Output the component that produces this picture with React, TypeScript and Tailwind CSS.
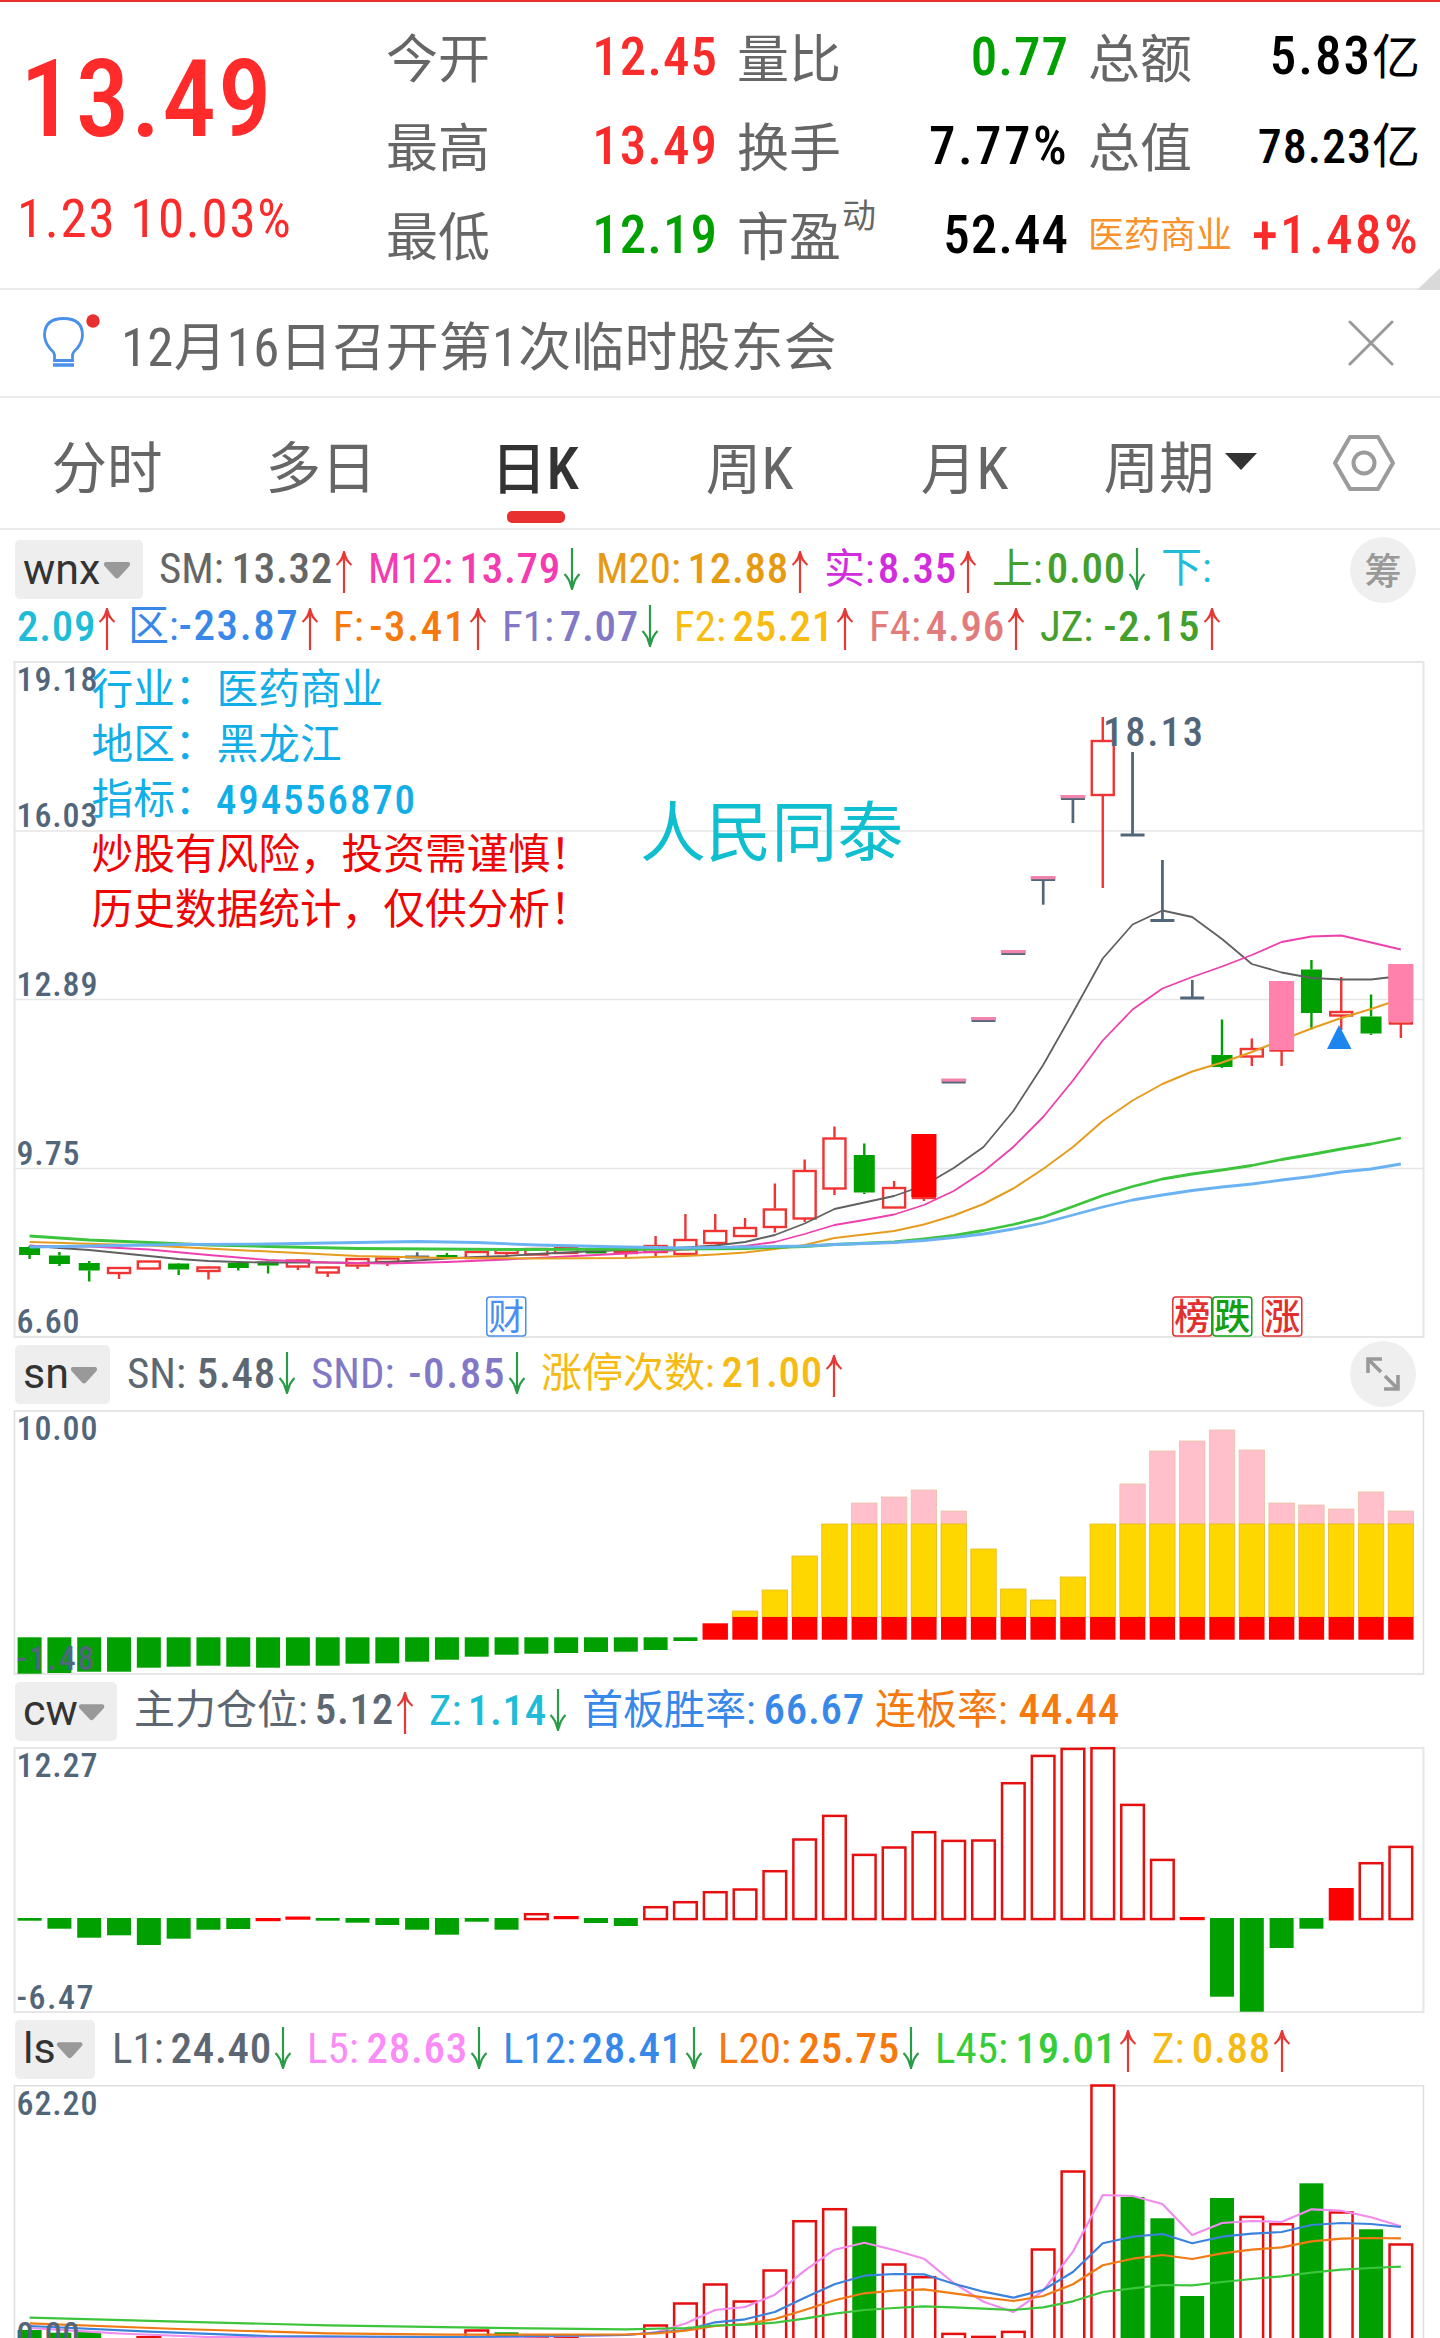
import clsx from "clsx";

const RED = "#e60f0f";
const GREEN = "#00a000";
const SLATE = "#52667a";
const FONT = "'Roboto Condensed', 'Noto Sans CJK SC', sans-serif";

// 47 trading days on screen
const STEP = 29.81;
const cx = (i: number) => 29.6 + i * STEP;

type Quote = { label: string; sup?: string; value: string; unit?: string; color: string; labelClass?: string; valueClass?: string };

const quotes: Quote[][] = [
  [
    { label: "今开", value: "12.45", color: "text-[#fa2b2b]" },
    { label: "最高", value: "13.49", color: "text-[#fa2b2b]" },
    { label: "最低", value: "12.19", color: "text-[#00a000]" },
  ],
  [
    { label: "量比", value: "0.77", color: "text-[#00a000]" },
    { label: "换手", value: "7.77%", color: "text-black", valueClass: "text-[53px] tracking-[2.4px]" },
    { label: "市盈", sup: "动", value: "52.44", color: "text-black" },
  ],
  [
    { label: "总额", value: "5.83", unit: "亿", color: "text-black", valueClass: "text-[53px] tracking-[2px]" },
    { label: "总值", value: "78.23", unit: "亿", color: "text-black", valueClass: "text-[48px] tracking-[1px] pt-[3px]" },
    { label: "医药商业", value: "+1.48%", color: "text-[#fa2b2b]", labelClass: "text-[36px] pt-[2px] text-[#f7922d]", valueClass: "text-[53px] tracking-[2.4px]" },
  ],
];

type Item = { name: string; value: string; color: string; w: string; dir?: "up" | "down" };

const wnxRow1: Item[] = [
  { name: "SM:", value: "13.32", color: "text-[#666666]", w: "w-[209px]", dir: "up" },
  { name: "M12:", value: "13.79", color: "text-[#f53bb0]", w: "w-[228px]", dir: "down" },
  { name: "M20:", value: "12.88", color: "text-[#e69a12]", w: "w-[228px]", dir: "up" },
  { name: "实:", value: "8.35", color: "text-[#d22ddc]", w: "w-[168px]", dir: "up" },
  { name: "上:", value: "0.00", color: "text-[#43a02c]", w: "w-[169px]", dir: "down" },
  { name: "下:", value: "", color: "text-[#1fbcd8]", w: "w-[60px]" },
];

const wnxRow2: Item[] = [
  { name: "", value: "2.09", color: "text-[#1fbcd8]", w: "w-[111px]", dir: "up" },
  { name: "区:", value: "-23.87", color: "text-[#3888ea]", w: "w-[205px]", dir: "up" },
  { name: "F:", value: "-3.41", color: "text-[#f5790e]", w: "w-[169px]", dir: "up" },
  { name: "F1:", value: "7.07", color: "text-[#8278c6]", w: "w-[172px]", dir: "down" },
  { name: "F2:", value: "25.21", color: "text-[#f8bb10]", w: "w-[195px]", dir: "up" },
  { name: "F4:", value: "4.96", color: "text-[#e27c7c]", w: "w-[171px]", dir: "up" },
  { name: "JZ:", value: "-2.15", color: "text-[#43a02c]", w: "w-[196px]", dir: "up" },
];

const snRow: Item[] = [
  { name: "SN:", value: "5.48", color: "text-[#5d6772]", w: "w-[184px]", dir: "down" },
  { name: "SND:", value: "-0.85", color: "text-[#8278c6]", w: "w-[230px]", dir: "down" },
  { name: "涨停次数:", value: "21.00", color: "text-[#f5bb14]", w: "w-[317px]", dir: "up" },
];

const cwRow: Item[] = [
  { name: "主力仓位:", value: "5.12", color: "text-[#5d6772]", w: "w-[295px]", dir: "up" },
  { name: "Z:", value: "1.14", color: "text-[#1fbcd8]", w: "w-[153px]", dir: "down" },
  { name: "首板胜率:", value: "66.67", color: "text-[#3888ea]", w: "w-[282px] mr-[11px]" },
  { name: "连板率:", value: "44.44", color: "text-[#f5790e]", w: "w-[244px]" },
];

const lsRow: Item[] = [
  { name: "L1:", value: "24.40", color: "text-[#5d6772]", w: "w-[195px]", dir: "down" },
  { name: "L5:", value: "28.63", color: "text-[#fb8cf6]", w: "w-[196px]", dir: "down" },
  { name: "L12:", value: "28.41", color: "text-[#3888ea]", w: "w-[215px]", dir: "down" },
  { name: "L20:", value: "25.75", color: "text-[#f5790e]", w: "w-[217px]", dir: "down" },
  { name: "L45:", value: "19.01", color: "text-[#38cc38]", w: "w-[217px]", dir: "up" },
  { name: "Z:", value: "0.88", color: "text-[#f5bb14]", w: "w-[154px]", dir: "up" },
];

type Candle = { kind: "red" | "green" | "cross"; top: number; bottom: number; high?: number; low?: number };

const r = (top: number, bottom: number, high?: number, low?: number): Candle => ({ kind: "red", top, bottom, high, low });
const g = (top: number, bottom: number, high?: number, low?: number): Candle => ({ kind: "green", top, bottom, high, low });
const x = (top: number, bottom: number, high?: number, low?: number): Candle => ({ kind: "cross", top, bottom, high, low });

const candles: Candle[] = [
  g(1247, 1255, 1246, 1259), g(1255.5, 1264, 1252, 1266), g(1263, 1270.5, 1261, 1281.5), r(1267, 1273, 1267, 1279),
  r(1260.5, 1268.5), g(1263.5, 1269.5, 1263, 1275), r(1266.5, 1271, 1266, 1279.5), g(1263, 1268, 1262, 1270.5),
  g(1261.5, 1265.5, 1261, 1273.5), r(1259.5, 1266.5, 1259, 1270), r(1266.5, 1272.5, 1266, 1277), r(1258, 1265.5, 1258, 1269),
  r(1257.5, 1262, 1257, 1266), x(1257, 1257, 1252.5, 1258), g(1255, 1259, 1253, 1259), r(1251, 1258),
  r(1248.5, 1253, 1248, 1255.5), r(1248, 1254.5), r(1247, 1253), g(1249, 1253.5), r(1250, 1253, 1249, 1258),
  r(1245, 1252, 1236, 1256), r(1239, 1254, 1214, 1254), r(1230, 1243, 1214, 1243), r(1227, 1236, 1218, 1236),
  r(1208.5, 1227, 1183.5, 1232.5), r(1170, 1218.5, 1159.5, 1222), r(1137.5, 1188.5, 1126.5, 1195), g(1155, 1192.5, 1143.5, 1194),
  r(1187, 1207.5, 1181, 1207.5), r(1136, 1198, 1134, 1201), x(1082, 1082), x(1020.5, 1020.5), x(953.5, 953.5),
  x(879.5, 879.5, 878, 904.5), x(798.5, 798.5, 797, 823), r(740, 795, 717, 888), x(835, 835, 752, 836),
  x(920.5, 920.5, 860, 921), x(998, 998, 980, 999), g(1055, 1067, 1019.5, 1068), r(1048, 1056.5, 1038.5, 1066),
  r(982, 1050.5, 982, 1066), g(969.5, 1013, 960, 1029.5), r(1011, 1015.5, 977, 1030), g(1016.5, 1033.5, 994.5, 1035),
  r(965, 1023.5, 965, 1038),
];

// limit-up days get a filled body drawn above everything else
const fills = [
  { i: 30, y: 1134, h: 63, color: "#ff0000" },
  { i: 31, y: 1078.5, h: 3.2, color: "#f084ac" },
  { i: 32, y: 1017, h: 3.2, color: "#f084ac" },
  { i: 33, y: 950, h: 3.2, color: "#f084ac" },
  { i: 34, y: 876, h: 3.2, color: "#f084ac" },
  { i: 35, y: 795, h: 3.2, color: "#f084ac" },
  { i: 42, y: 981, h: 69, color: "#ff82ac" },
  { i: 46, y: 964, h: 58, color: "#ff82ac" },
];

type Line = { color: string; width: number; pts: number[][] };

const seq = (start: number, ys: number[]) => ys.map((y, k) => [start + k, y]);

const maLines: Line[] = [
  {
    color: "#606060", width: 1.8,
    pts: seq(0, [1245.5, 1248, 1250, 1253, 1256, 1259, 1261, 1262, 1262.5, 1262.5, 1262.5, 1263, 1262, 1260.5, 1258.5, 1257, 1256, 1254, 1252.5, 1251, 1250, 1249, 1247.5, 1245.5, 1242, 1235, 1223.5, 1209, 1202.5, 1196, 1185.5, 1168, 1147, 1111, 1065, 1012.5, 958.5, 924.5, 910.5, 917, 939, 964, 972.5, 978, 979.5, 979.5, 976]),
  },
  {
    color: "#ee3fae", width: 1.8,
    pts: [[0, 1246], [2, 1246.5], [4, 1249.5], [6, 1255], [8, 1260], [10, 1262.5], [12, 1263.5], [14, 1262], [16, 1259.5], [18, 1256.5], [20, 1253.5], [22, 1249.5], ...seq(23, [1248, 1246, 1242, 1234, 1225, 1220, 1214.5, 1205, 1191, 1171.5, 1147, 1117, 1080.5, 1040.5, 1009.5, 988.5, 977, 966.5, 955, 942, 936.5, 935.5, 942.5, 949.5])],
  },
  {
    color: "#e69c1e", width: 2,
    pts: [[0, 1242], [4, 1245.5], [8, 1251.5], [11, 1256], [14, 1258], [17, 1258.5], [20, 1258], [22, 1256], ...seq(23, [1254.5, 1252.5, 1249, 1245, 1238, 1234.5, 1231, 1224.5, 1215.5, 1204, 1188.5, 1169, 1147, 1121, 1100.5, 1084, 1071.5, 1062.5, 1052, 1040, 1028.5, 1018, 1009, 999])],
  },
  {
    color: "#3cc43c", width: 2.8,
    pts: [[0, 1236], [2, 1240], [4, 1242.5], [6, 1245], [8, 1246.5], [11, 1248.5], [16, 1249.5], [22, 1249], [24, 1248.5], [26, 1246.5], [27, 1244.5], ...seq(29, [1242, 1239, 1235.5, 1230.5, 1224.5, 1217, 1206.5, 1195.5, 1186.5, 1179, 1174, 1170, 1165.5, 1159.5, 1154.5, 1149, 1144, 1138])],
  },
  {
    color: "#6ab2f2", width: 2.8,
    pts: [[0, 1247], [2, 1246], [5, 1244.5], [8, 1244], [10, 1243], [13, 1241.5], [15, 1242.5], [17, 1245], [20, 1247], [22, 1248], [24, 1247], [26, 1246], [27, 1244.5], ...seq(29, [1242.5, 1240.5, 1237.5, 1234, 1229, 1223, 1215, 1207, 1200, 1195, 1190.5, 1187, 1184, 1180, 1176.5, 1172, 1169, 1164])],
  },
];

const snGreen = [1673.7, 1673, 1671.7, 1671.7, 1667.7, 1666.7, 1665.7, 1666.7, 1667.7, 1665.7, 1665.7, 1663.7, 1663.3, 1661.7, 1659.7, 1656.7, 1654.7, 1653.7, 1653, 1652, 1651.7, 1650, 1641];
const snTops = [1623.3, 1611, 1590, 1556, 1523, 1503, 1497, 1490, 1511, 1549, 1589, 1600, 1577, 1523.7, 1484, 1451, 1441, 1430, 1450, 1503, 1505, 1509, 1492, 1511];

type Bar = [kind: "g" | "r" | "R", y: number];

const cwBars: Bar[] = [
  ["g", 1920.7], ["g", 1928.7], ["g", 1937.7], ["g", 1935.3], ["g", 1945], ["g", 1938.7], ["g", 1929.7], ["g", 1929], ["R", 1918], ["R", 1916.5],
  ["g", 1920.7], ["g", 1922.7], ["g", 1925], ["g", 1929.7], ["g", 1934.7], ["g", 1921.7], ["g", 1929.7], ["r", 1913], ["R", 1916], ["g", 1923],
  ["g", 1926], ["r", 1906], ["r", 1901], ["r", 1891], ["r", 1888.3], ["r", 1870], ["r", 1838.3], ["r", 1814.7], ["r", 1853.7], ["r", 1846.3],
  ["r", 1831], ["r", 1839.7], ["r", 1839.3], ["r", 1782], ["r", 1754.7], ["r", 1747.7], ["r", 1747], ["r", 1803.7], ["r", 1858.7], ["R", 1917],
  ["g", 1996.7], ["g", 2011.7], ["g", 1948], ["g", 1928.7], ["R", 1888], ["r", 1862], ["r", 1845.7],
];

const lsBars: [number, "g" | "r", number][] = [
  [0, "g", 2330], [1, "g", 2332.7], [2, "g", 2332], [4, "r", 2336], [9, "r", 2337], [15, "r", 2329.3], [16, "g", 2332.3], [17, "r", 2335.5],
  [18, "r", 2336], [21, "r", 2324.3], [22, "r", 2302.3], [23, "r", 2283.3], [24, "r", 2300.3], [25, "r", 2269.3], [26, "r", 2220], [27, "r", 2208],
  [28, "g", 2226.3], [29, "r", 2263.3], [30, "r", 2276], [31, "r", 2332.7], [32, "r", 2335.7], [33, "r", 2330.7], [34, "r", 2248.3], [35, "r", 2170.3],
  [36, "r", 2084.3], [37, "g", 2197], [38, "g", 2218.3], [39, "g", 2296], [40, "g", 2198], [41, "r", 2215.7], [42, "r", 2223], [43, "g", 2183.3],
  [44, "r", 2211.3], [45, "g", 2229.3], [46, "r", 2243.3],
];

const lsLines: Line[] = [
  {
    color: "#f08cee", width: 2.2,
    pts: [[0, 2328], [2, 2331.7], [3, 2333.5], [6, 2337], [14, 2338], [20, 2335], [21, 2332.5], ...seq(22, [2323.5, 2310, 2307, 2294.7, 2270.7, 2249.7, 2242.7, 2250, 2258.7, 2283, 2301.7, 2312, 2290.7, 2251.7, 2195, 2196, 2204, 2235, 2223, 2221, 2222, 2209.3, 2210.7, 2217.3, 2226.3])],
  },
  {
    color: "#3a82dc", width: 2.2,
    pts: [[0, 2326], [4, 2331.7], [8, 2336], [14, 2337], [20, 2335], ...seq(22, [2330, 2322.3, 2319.3, 2312, 2297.7, 2284.3, 2275.7, 2274, 2274.3, 2283.7, 2291.7, 2297.7, 2290, 2272, 2243.3, 2236.7, 2234, 2243.3, 2236.7, 2233.7, 2232, 2225, 2223, 2224, 2227])],
  },
  {
    color: "#f07a14", width: 2.2,
    pts: [[0, 2323.3], [5, 2329], [10, 2333.3], [14, 2334.7], [20, 2334.5], ...seq(21, [2333.3, 2330.7, 2326, 2324, 2319, 2310, 2300.3, 2293.3, 2290.7, 2289.3, 2293.3, 2297.3, 2301, 2296, 2284.3, 2265.3, 2258.7, 2255, 2259, 2253.3, 2249.7, 2247.3, 2241.3, 2238.7, 2238, 2238.3])],
  },
  {
    color: "#3cc43c", width: 2.2,
    pts: [[0, 2317.7], [5, 2321.7], [10, 2325.3], [15, 2327.7], [20, 2329.3], ...seq(22, [2328, 2325.5, 2324.7, 2322.7, 2318.7, 2313.7, 2310, 2308, 2306.3, 2307.3, 2308.7, 2310, 2307.3, 2301.3, 2292, 2288.3, 2285, 2285.3, 2282, 2279, 2276.3, 2272.7, 2269.7, 2268, 2266.7])],
  },
];

const tags = [
  { x: 486, text: "财", color: "#4a8ef0" },
  { x: 1172, text: "榜", color: "#e23030" },
  { x: 1212, text: "跌", color: "#12a012" },
  { x: 1262, text: "涨", color: "#e23030" },
];

const notes = [
  { y: 703.5, text: "行业：医药商业", color: "#12aee8" },
  { y: 758.5, text: "地区：黑龙江", color: "#12aee8" },
  { y: 813.5, text: "指标：", color: "#12aee8" },
  { y: 868.5, text: "炒股有风险，投资需谨慎！", color: "#f00505" },
  { y: 923.5, text: "历史数据统计，仅供分析！", color: "#f00505" },
];

function Arrow({ dir }: { dir: "up" | "down" }) {
  return (
    <svg
      viewBox="0 0 18 42"
      className={clsx("ml-[3px] mr-[15px] h-[42px] w-[18px] shrink-0", dir === "up" ? "translate-y-[2px]" : "-translate-y-px")}
      fill="none"
      stroke={dir === "up" ? "#e53935" : "#2a9c48"}
      strokeWidth="2.2"
    >
      {dir === "up" ? (
        <path d="M9 42V2M1.5 14Q6.5 10 9 2Q11.5 10 16.5 14M6 10L9 1L12 10" />
      ) : (
        <path d="M9 0V40M1.5 26Q6.5 31 9 40Q11.5 31 16.5 26M6 32L9 41L12 32" />
      )}
    </svg>
  );
}

function Legend({ items }: { items: Item[] }) {
  return (
    <>
      {items.map((item) => (
        <div key={item.name + item.value} className={clsx("flex shrink-0 items-center whitespace-nowrap text-[43px] leading-[56px]", item.w, item.color)}>
          <span className="-mt-[3px] flex flex-1 items-baseline justify-between">
            <span className={clsx("font-[430]", item.name.charCodeAt(0) > 255 && "text-[41px]")}>{item.name}</span>
            <span className={clsx("-mr-px font-[480]", item.value.startsWith("-") ? "tracking-[1.6px]" : "tracking-[0.7px]")}>{item.value}</span>
          </span>
          {item.dir && <Arrow dir={item.dir} />}
        </div>
      ))}
    </>
  );
}

function Picker({ name, className }: { name: string; className: string }) {
  return (
    <button className={clsx("ml-[15px] flex h-[59px] shrink-0 items-center justify-between rounded-[5px] bg-[#eeeeee] pl-[8px] pr-[12px] font-['Roboto'] text-[43px] font-normal leading-[50px] text-[#333333]", className)}>
      <span className="-mt-[2px]">{name}</span>
      <svg viewBox="0 0 28 17" className="mt-[2px] h-[17px] w-[28px] fill-[#999999]">
        <path d="M2.5 0H25.5Q28 1 26.5 4L16 15.5Q14 17.5 12 15.5L1.5 4Q0 1 2.5 0Z" />
      </svg>
    </button>
  );
}

function Poly({ line }: { line: Line }) {
  return <polyline points={line.pts.map(([i, y]) => `${cx(i)},${y}`).join(" ")} fill="none" stroke={line.color} strokeWidth={line.width} strokeLinejoin="round" />;
}

function AxisLabel({ y, w, children }: { y: number; w: number; children: string }) {
  return (
    <text x={16.5} y={y} textLength={w} fontSize={34} fontWeight={460} fill={SLATE}>
      {children}
    </text>
  );
}

function Hollow({ i, y, bottom }: { i: number; y: number; bottom: number }) {
  return <rect x={cx(i) - 11.3} y={y + 1.2} width={22.6} height={Math.max(bottom - y - 2.4, 1)} fill="none" stroke={RED} strokeWidth={2.5} />;
}

function KChart() {
  return (
    <svg viewBox="0 661 1440 677" className="block h-[677px] w-full overflow-visible" style={{ fontFamily: FONT }}>
      <rect x={14.5} y={662} width={1409} height={675} fill="none" stroke="#e6e6e6" strokeWidth={2} />
      {[831, 999.5, 1168.5].map((y) => (
        <path key={y} d={`M15 ${y}H1423`} stroke="#e6e6e6" strokeWidth={1.5} />
      ))}
      {candles.map((c, i) => {
        const color = c.kind === "red" ? "#f03434" : c.kind === "green" ? GREEN : SLATE;
        return (
          <g key={i} stroke={color} strokeWidth={2.4}>
            {c.high && <path d={`M${cx(i)} ${c.high}V${c.top}M${cx(i)} ${c.bottom}V${c.low}`} />}
            {c.kind === "cross" && c.high && <path d={`M${cx(i)} ${c.high}V${c.low}`} />}
            {c.kind === "cross" && <path d={`M${cx(i) - 12} ${c.top}H${cx(i) + 12}`} strokeWidth={3} />}
            {c.kind === "green" && <rect x={cx(i) - 10.5} y={c.top} width={21} height={c.bottom - c.top} fill={color} stroke="none" />}
            {c.kind === "red" && <rect x={cx(i) - 11} y={c.top + 1} width={22} height={c.bottom - c.top - 1} fill="white" />}
          </g>
        );
      })}
      {maLines.map((line) => <Poly key={line.color} line={line} />)}
      {fills.map((f) => <rect key={f.i} x={cx(f.i) - 12.5} y={f.y} width={25} height={f.h} fill={f.color} />)}
      <path d="M1339 1025L1351.5 1049H1327Z" fill="#1c86ee" />

      <AxisLabel y={691} w={81}>19.18</AxisLabel>
      <AxisLabel y={827} w={81}>16.03</AxisLabel>
      <AxisLabel y={995.5} w={81}>12.89</AxisLabel>
      <AxisLabel y={1164.5} w={63}>9.75</AxisLabel>
      <AxisLabel y={1332.5} w={63}>6.60</AxisLabel>

      {notes.map((n) => (
        <text key={n.y} x={91.5} y={n.y} fontSize={41.7} fill={n.color} fontFamily="Noto Sans CJK SC">{n.text}</text>
      ))}
      <text x={216} y={813.5} fontSize={41} fontWeight={500} fill="#12aee8" textLength={199}>494556870</text>
      <text x={640} y={856} fontSize={65.8} fontWeight={400} fill="#0fbfcf">人民同泰</text>
      <text x={1103} y={745.5} fontSize={40.5} fontWeight={470} fill={SLATE} textLength={100}>18.13</text>

      {tags.map((t) => (
        <g key={t.text}>
          <rect x={t.x + 0.8} y={1297} width={39} height={39} rx={3} fill="white" stroke={t.color} strokeWidth={1.5} />
          <text x={t.x + 20.3} y={1330} fontSize={36} fontWeight={t.text === "财" ? 400 : 500} textAnchor="middle" fill={t.color}>{t.text}</text>
        </g>
      ))}
    </svg>
  );
}

function SnChart() {
  return (
    <svg viewBox="0 1410 1440 265" className="block h-[265px] w-full overflow-visible" style={{ fontFamily: FONT }}>
      <rect x={14.5} y={1411} width={1409} height={263} fill="none" stroke="#dedede" strokeWidth={1.5} />
      {snGreen.map((y, i) => <rect key={i} x={cx(i) - 12} y={1637.3} width={24} height={y - 1637.3} fill={GREEN} />)}
      {snTops.map((y, k) => {
        const left = cx(k + 23) - 12.7;
        return (
          <g key={k}>
            {y < 1520 && <rect x={left} y={y} width={25.4} height={1524 - y} fill="#ffc0cb" stroke="#ecc0a4" strokeWidth={0.8} />}
            {y < 1617 && <rect x={left} y={Math.max(y, 1524)} width={25.4} height={1617 - Math.max(y, 1524)} fill="#ffd700" stroke="#e8b818" strokeWidth={0.8} />}
            <rect x={left} y={Math.max(y, 1617)} width={25.4} height={1639.7 - Math.max(y, 1617)} fill="#ff0000" />
          </g>
        );
      })}
      <AxisLabel y={1439.5} w={81}>10.00</AxisLabel>
      <AxisLabel y={1670} w={78}>-1.48</AxisLabel>
    </svg>
  );
}

function CwChart() {
  return (
    <svg viewBox="0 1747 1440 266" className="block h-[266px] w-full overflow-visible" style={{ fontFamily: FONT }}>
      <rect x={14.5} y={1748} width={1409} height={264} fill="none" stroke="#e6e6e6" strokeWidth={2} />
      {cwBars.map(([kind, y], i) => {
        if (kind === "r") return <Hollow key={i} i={i} y={y} bottom={1920.3} />;
        if (kind === "R") return <rect key={i} x={cx(i) - 12.5} y={y} width={25} height={y > 1900 ? 3.2 : 32.5} fill="#ff0000" />;
        return <rect key={i} x={cx(i) - 12} y={1918} width={24} height={y - 1918} fill={GREEN} />;
      })}
      <AxisLabel y={1776.5} w={81}>12.27</AxisLabel>
      <AxisLabel y={2008.7} w={77}>-6.47</AxisLabel>
    </svg>
  );
}

function LsChart() {
  return (
    <svg viewBox="0 2085 1440 253" className="block h-[253px] w-full overflow-visible" style={{ fontFamily: FONT }}>
      <path d="M14.5 2345V2085.7H1423.5V2345" fill="none" stroke="#dedede" strokeWidth={1.5} />
      {lsBars.map(([i, kind, y]) =>
        kind === "r" ? (
          <Hollow key={i} i={i} y={y} bottom={2360} />
        ) : (
          <rect key={i} x={cx(i) - 12} y={y} width={24} height={2360 - y} fill={GREEN} />
        )
      )}
      {lsLines.map((line) => <Poly key={line.color} line={line} />)}
      <AxisLabel y={2115} w={81}>62.20</AxisLabel>
      <AxisLabel y={2345.5} w={63}>0.00</AxisLabel>
    </svg>
  );
}

export default function App() {
  return (
    <div className="h-[2338px] w-[1440px] overflow-hidden bg-white font-['Roboto_Condensed','Noto_Sans_CJK_SC',sans-serif]">
      {/* Quote header */}
      <header className="relative flex h-[290px] border-b-2 border-t-2 border-b-[#ebebeb] border-t-[#e93030]">
        <div className="w-[386px] text-[#fa2b2b]">
          <p className="pl-[20px] pt-[41px] text-[108px] font-medium leading-[112px] tracking-[1.4px] text-[#ff2a2a]">13.49</p>
          <p className="mt-[34px] whitespace-nowrap pl-[17px] text-[53px] font-[450] leading-[60px] tracking-[1.7px]">1.23 10.03%</p>
        </div>
        <div className="flex gap-[20px] pt-[10px]">
          {quotes.map((col, k) => (
            <div key={k} className="w-[332px] -mr-px">
              {col.map((q) => (
                <div key={q.label} className="flex h-[89px] items-center justify-between whitespace-nowrap leading-[60px]">
                  <span className={clsx("relative", q.labelClass ?? "pt-[8px] text-[52px] text-[#666666]")}>
                    {q.label}
                    {q.sup && <sup className="absolute -top-[3px] left-[105px] text-[34px] leading-[36px]">{q.sup}</sup>}
                  </span>
                  <span className={clsx("font-[480]", q.color, q.valueClass ?? "text-[53px] tracking-[1px]")}>
                    {q.value}
                    {q.unit && <span className="text-[48px] font-normal tracking-normal">{q.unit}</span>}
                  </span>
                </div>
              ))}
            </div>
          ))}
        </div>
        <svg viewBox="0 0 23 22" className="absolute -bottom-[2px] right-0 h-[22px] w-[23px] fill-[#d9d9d9]">
          <path d="M23 0V22H0Z" />
        </svg>
      </header>

      {/* Notice */}
      <div className="flex h-[108px] items-center border-b-2 border-[#ebebeb] text-[#666666]">
        <svg viewBox="0 0 60 58" className="ml-[42px] h-[58px] w-[60px] shrink-0" fill="none" stroke="#4a90ea" strokeWidth="2.8">
          <path d="M12.5 46.5V41Q12 38 8 34.5Q2.5 28 2.5 20.5Q3 4.5 21.5 4.5Q40 4.5 40.5 20.5Q40.5 28 35 34.5Q31 38 30.5 41V46.5Z" />
          <path d="M11 51H32" strokeWidth="3.5" />
          <circle cx="51" cy="7" r="6.7" fill="#e93030" stroke="none" />
        </svg>
        <p className="ml-[19px] mt-[10px] flex-1 text-[52.8px] leading-[70px] tracking-[0.3px]">12月16日召开第1次临时股东会</p>
        <svg viewBox="0 0 46 46" className="mr-[46px] h-[46px] w-[46px]" stroke="#999999" strokeWidth="3" strokeLinecap="round">
          <path d="M2 2L44 44M44 2L2 44" />
        </svg>
      </div>

      {/* Period tabs */}
      <nav className="flex h-[132px] items-center border-b-2 border-[#ebebeb] text-[55.5px] leading-[70px] text-[#666666]">
        <span className="w-[214px] pt-[14px] text-center">分时</span>
        <span className="w-[214px] pt-[14px] text-center">多日</span>
        <span className="relative w-[214px] pt-[14px] text-center font-medium text-[#333333]">
          日<span className="text-[59px]">K</span>
          <i className="absolute -bottom-[17px] left-[79px] h-[12px] w-[58px] rounded-[5px] bg-[#e93030]" />
        </span>
        <span className="w-[215px] pt-[14px] text-center">周<span className="text-[59px]">K</span></span>
        <span className="w-[215px] pt-[14px] text-center">月<span className="text-[59px]">K</span></span>
        <span className="flex w-[216px] items-center justify-center gap-[10px] pt-[14px]">
          周期
          <svg viewBox="0 0 32 17" className="-mt-[17px] h-[17px] w-[32px] fill-[#333333]">
            <path d="M0 0H32L16 17Z" />
          </svg>
        </span>
        <svg viewBox="0 0 64 58" className="ml-[44px] h-[58px] w-[64px]" fill="none" stroke="#9b9b9b" strokeWidth="4" strokeLinejoin="round">
          <path d="M18 3H46L61 29L46 55H18L3 29Z" />
          <circle cx="32" cy="29" r="10.5" />
        </svg>
      </nav>

      {/* Main chart */}
      <div className="h-[131px] pt-[11px]">
        <div className="flex h-[57px] items-center">
          <Picker name="wnx" className="w-[128px]" />
          <div className="ml-[16px] flex">
            <Legend items={wnxRow1} />
          </div>
          <span className="ml-auto mr-[24px] flex h-[66px] w-[66px] items-center justify-center rounded-full bg-[#efefef] pt-[7px] text-[37px] font-medium leading-[50px] text-[#999999]">筹</span>
        </div>
        <div className="ml-[17px] flex h-[58px] items-center">
          <Legend items={wnxRow2} />
        </div>
      </div>
      <KChart />

      <div className="flex h-[72px] items-center">
        <Picker name="sn" className="w-[95px]" />
        <div className="ml-[17px] flex">
          <Legend items={snRow} />
        </div>
        <span className="ml-auto mr-[24px] flex h-[66px] w-[66px] items-center justify-center rounded-full bg-[#efefef]">
          <svg viewBox="0 0 34 34" className="h-[34px] w-[34px]" fill="none" stroke="#999999" strokeWidth="3.6">
            <path d="M2 16V2H16M2 2L15 15M32 18V32H18M32 32L19 19" />
          </svg>
        </span>
      </div>
      <SnChart />

      <div className="flex h-[72px] items-center">
        <Picker name="cw" className="w-[102px]" />
        <div className="ml-[17px] flex">
          <Legend items={cwRow} />
        </div>
      </div>
      <CwChart />

      <div className="flex h-[72px] items-center">
        <Picker name="ls" className="w-[80px]" />
        <div className="ml-[17px] flex">
          <Legend items={lsRow} />
        </div>
      </div>
      <LsChart />
    </div>
  );
}
